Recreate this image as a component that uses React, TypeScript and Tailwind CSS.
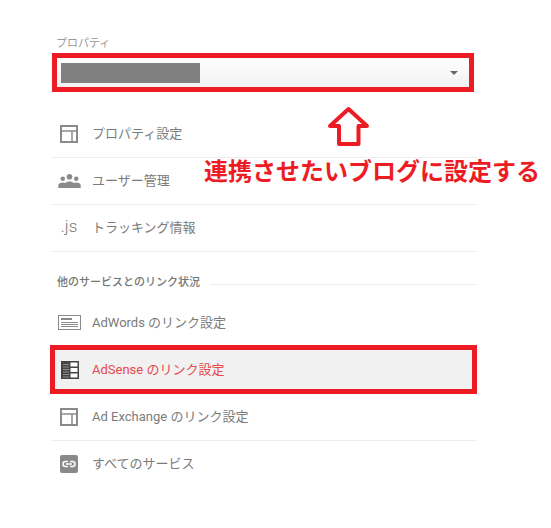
const font = "font-['Roboto','Noto_Sans_CJK_JP',sans-serif]";

function Panel() {
  return (
    <svg width="18" height="18" viewBox="0 0 18 18">
      <rect x="1" y="1" width="16" height="16" fill="none" stroke="#8a8a8a" strokeWidth="2" />
      <path d="M1 6h16M12 6V17" stroke="#8a8a8a" strokeWidth="1.5" fill="none" />
    </svg>
  );
}

function Users() {
  return (
    <svg width="23" height="14" viewBox="0 0 24 15" fill="#8a8a8a">
      <circle cx="12" cy="3" r="3" />
      <circle cx="4.800" cy="5" r="2.400" />
      <circle cx="19.200" cy="5" r="2.400" />
      <path d="M0 15v-3c0-2 2.500-3 4.800-3 1 0 2 .2 2.800.6C9 8.500 10.500 8 12 8s3 .5 4.400 1.600c.8-.4 1.800-.6 2.800-.6 2.300 0 4.800 1 4.800 3v3z" />
    </svg>
  );
}

function AdWords() {
  return (
    <svg width="23" height="15" viewBox="0 0 23 15">
      <rect x=".5" y=".5" width="22" height="14" fill="#fff" stroke="#8a8a8a" />
      <path d="M3 3h11v2H3z" fill="#8a8a8a" />
      <path d="M3 7.500h17M3 9.500h17M3 11.500h17" stroke="#8a8a8a" />
    </svg>
  );
}

function AdSense() {
  return (
    <svg width="18" height="18" viewBox="0 0 18 18">
      <rect width="18" height="18" fill="#444" />
      <path d="M2 3.500h6M2 6h6M2 8.500h6M2 11h6M2 13.500h6M2 16h6" stroke="#8f8f8f" />
      <path d="M9.500 1.500H16.500V5.500H9.500zM9.500 7H16.500V11H9.500zM9.500 12.500H16.500V16.500H9.500z" fill="#fff" />
    </svg>
  );
}

function LinkIcon() {
  return (
    <svg width="18" height="18" viewBox="0 0 18 18">
      <rect width="18" height="18" rx="2" fill="#8a8a8a" />
      <path d="M8 6.500H5.500a2.500 2.500 0 0 0 0 5H8M10 6.500h2.500a2.500 2.500 0 0 1 0 5H10M6 9h6" stroke="#fff" strokeWidth="1.500" fill="none" />
    </svg>
  );
}

function Row({ icon, label, divider = true, className = "" }: { icon: React.ReactNode; label: string; divider?: boolean; className?: string }) {
  return (
    <div className={`flex h-[47px] items-center ${divider ? "border-b border-[#eeeeee]" : ""} ${className}`}>
      <div className="flex w-[41px] shrink-0 justify-center pr-[5px]">{icon}</div>
      <span className="text-[13px] text-[#7b7b7b]">{label}</span>
    </div>
  );
}

export default function App() {
  return (
    <div className={`relative h-[528px] w-[551px] overflow-hidden bg-white ${font}`}>
      <div className="ml-[51px] w-[426px] pt-[37px]">
        <div className="pl-[5px] text-[11px] leading-[14px] text-[#999999]">プロパティ</div>
        <div className="mt-[2px] ml-[1px] flex h-[39px] w-[422px] items-center justify-between border-[5px] border-[#ed1c24] bg-gradient-to-b from-white to-[#f1f1f1] pl-[4px] pr-[11px]">
          <div className="h-[20px] w-[139px] bg-[#808080]" />
          <div className="h-0 w-0 border-x-[4px] border-t-[4px] border-x-transparent border-t-[#666666]" />
        </div>

        <div className="mt-[19px]">
          <Row icon={<Panel />} label="プロパティ設定" />
          <Row icon={<Users />} label="ユーザー管理" />
          <Row icon={<span className="-mt-[2px] text-[17px] font-light text-[#777777]">.js</span>} label="トラッキング情報" />
        </div>

        <div className="mt-[23px] flex items-center pl-[6px]">
          <span className="text-[11px] leading-[16px] font-medium text-[#757575]">他のサービスとのリンク状況</span>
          <div className="mt-[3px] ml-[10px] h-px flex-1 bg-[#eeeeee]" />
        </div>

        <div className="mt-[8px]">
          <Row icon={<AdWords />} label="AdWords のリンク設定" divider={false} />
          <Row
            icon={<AdSense />}
            label="AdSense のリンク設定"
            divider={false}
            className="-mt-px -ml-px h-[49px] border-[5px] border-[#ed1c24] bg-[#f1f1f1] [&>div]:w-[37px] [&>div]:pr-[7px] [&>span]:text-[#e5484f]"
          />
          <Row icon={<Panel />} label="Ad Exchange のリンク設定" />
          <Row icon={<LinkIcon />} label="すべてのサービス" divider={false} className="-mt-px" />
        </div>
      </div>

      <svg className="absolute top-[106px] left-[327px]" width="44" height="41" viewBox="0 0 44 41">
        <path d="M21.500 3 40 20H31.500V38H12V20H3Z" fill="#fff" stroke="#ed1c24" strokeWidth="4" strokeLinejoin="round" />
      </svg>

      <div className="absolute top-[156px] left-[204px] text-[24px] leading-[32px] font-bold whitespace-nowrap text-[#ed1c24]">
        連携させたいブログに設定する
      </div>
    </div>
  );
}
